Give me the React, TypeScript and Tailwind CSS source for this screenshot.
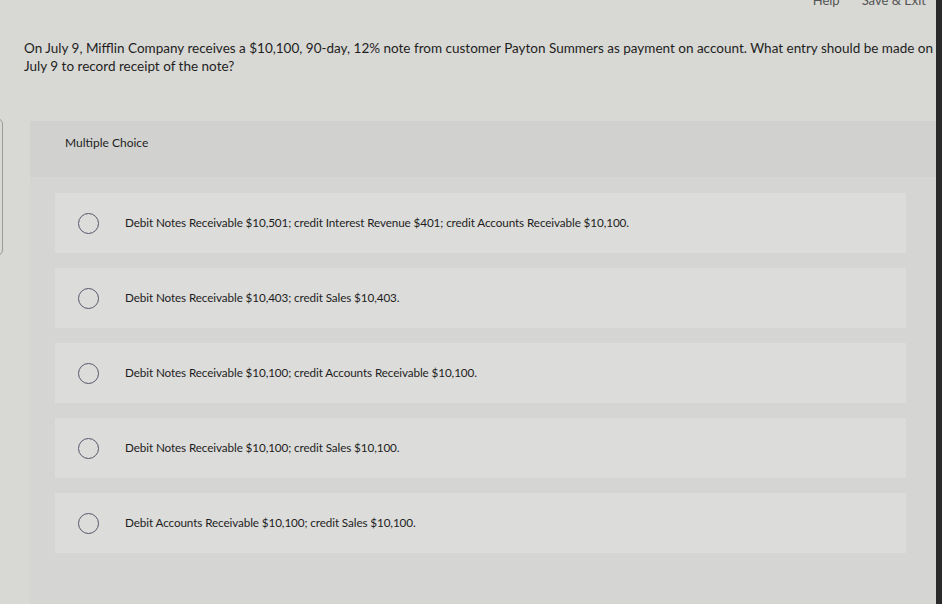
import React from "react";

const options = [
  "Debit Notes Receivable $10,501; credit Interest Revenue $401; credit Accounts Receivable $10,100.",
  "Debit Notes Receivable $10,403; credit Sales $10,403.",
  "Debit Notes Receivable $10,100; credit Accounts Receivable $10,100.",
  "Debit Notes Receivable $10,100; credit Sales $10,100.",
  "Debit Accounts Receivable $10,100; credit Sales $10,100.",
];

export default function App() {
  return (
    <div className="w-[942px] h-[604px] overflow-hidden flex bg-[#d8d8d4] font-['Lato',sans-serif] text-[#1e1e1e]">
      <div className="relative flex-1 flex flex-col">
        <div className="flex justify-end gap-[22px] pr-[10px] -mt-[7px] h-[14px] text-[13px] text-[#555] leading-[14px]">
          <span>Help</span>
          <span>Save &amp; Exit</span>
        </div>
        <div className="absolute left-[-12px] top-[118px] h-[138px] w-[15px] rounded-[6px] border border-[#9a9a98]" />
        <p className="mt-[32px] pl-[24px] pr-[2px] text-[13.5px] leading-[18px]">
          On July 9, Mifflin Company receives a $10,100, 90-day, 12% note from customer Payton Summers as payment on account. What entry should be made on July 9 to record receipt of the note?
        </p>
        <div className="mt-[46px] ml-[30px] flex-1 bg-[#d5d6d3] flex flex-col">
          <div className="h-[56px] bg-[#d1d2cf] pl-[35px] pt-[13px] text-[12px]">Multiple Choice</div>
          <div className="flex flex-col gap-[15px] pt-[16px] pl-[25px] pr-[30px]">
            {options.map((o) => (
              <div key={o} className="h-[60px] bg-[#dcdcda] flex items-center pl-[23px]">
                <span className="w-[21px] h-[21px] rounded-full border-[1.5px] border-[#55576a] shrink-0" />
                <span className="ml-[26px] text-[11.7px] tracking-[-0.1px]">{o}</span>
              </div>
            ))}
          </div>
        </div>
      </div>
      <div className="w-[6px] bg-[#2a2a2a]" />
    </div>
  );
}
